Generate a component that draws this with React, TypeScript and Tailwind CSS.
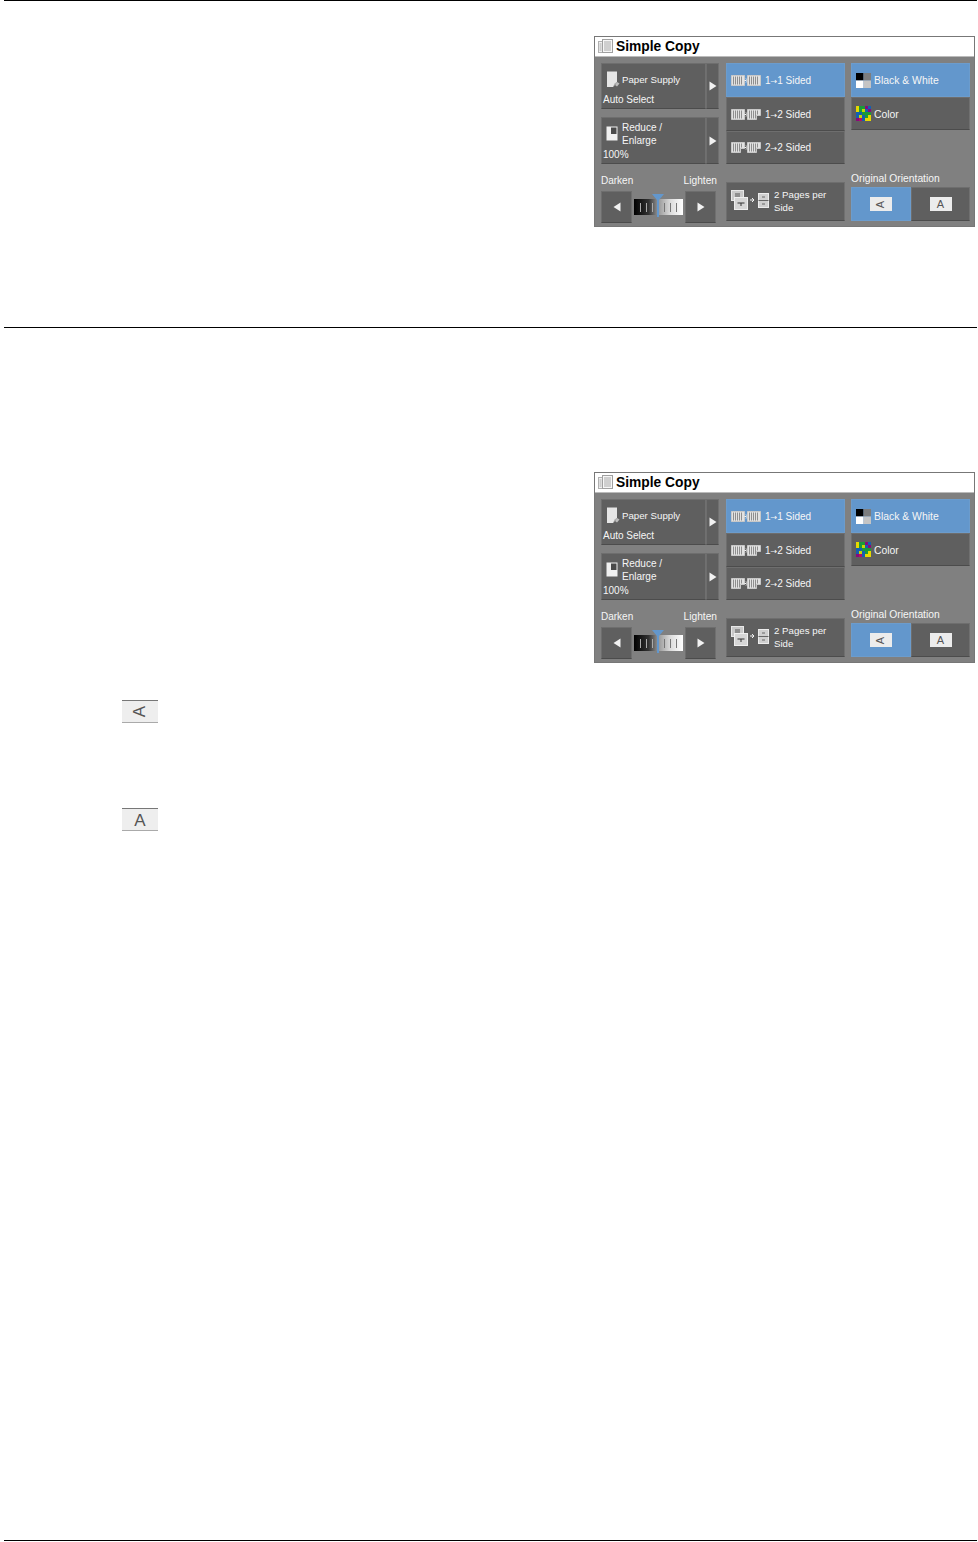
const FONT = "font-['Liberation_Sans',Arial,sans-serif]";

const Tri = ({ dir }: { dir: 'l' | 'r' }) => (
  <svg width="8" height="10" viewBox="0 0 8 10">
    <path d={dir === 'r' ? 'M0.5 0.5 L7.5 5 L0.5 9.5 Z' : 'M7.5 0.5 L0.5 5 L7.5 9.5 Z'} fill="#f2f2f2" />
  </svg>
);

const BookIcon = () => (
  <svg width="16" height="15" viewBox="0 0 16 15">
    <rect x="0.5" y="2.5" width="4" height="11" fill="#f0f0f0" stroke="#b0b0b0" />
    <rect x="4.5" y="0.5" width="10" height="13" fill="#f6f6f6" stroke="#a0a0a0" />
    <path d="M6 3h7M6 5h7M6 7h7M6 9h7M6 11h7M1.5 5h2M1.5 7h2M1.5 9h2M1.5 11h2" stroke="#a8a8a8" strokeWidth="1" />
  </svg>
);

const PaperIcon = () => (
  <svg width="15" height="17" viewBox="0 0 15 17">
    <path d="M1 0.5H11V11L7 16H1Z" fill="#e6e6e6" />
    <path d="M11 11L13.5 12.5L11 15.5L9 14Z" fill="#bdbdbd" />
    <path d="M7 16L8.5 12.5L11 11Z" fill="#a8a8a8" />
  </svg>
);

const ReduceIcon = () => (
  <svg width="12" height="15" viewBox="0 0 12 15">
    <rect x="0.5" y="0.5" width="11" height="14" fill="#f0f0f0" />
    <rect x="5" y="1.5" width="5.5" height="6.5" fill="#4a4a4a" />
  </svg>
);

const Page = ({ x, folded }: { x: number; folded?: boolean }) => (
  <g>
    <path
      d={folded ? `M${x} 0.5h13v6h-4v4h-9z` : `M${x} 0.5h13v10h-13z`}
      fill="#e2e2e2"
      stroke="#c8c8c8"
    />
    {[2, 4, 6, 8, 10].map((o) => (
      <path key={o} d={`M${x + o} 1.5v${folded && o > 8 ? 4 : 8}`} stroke="#8e8e8e" strokeWidth="1" />
    ))}
  </g>
);

const SidedIcon = ({ mode }: { mode: 1 | 2 | 3 }) => (
  <svg width="30" height="11" viewBox="0 0 30 11">
    <Page x={0.5} folded={mode === 3} />
    <path d="M13.5 5.5h2M15 3.5l2 2-2 2" stroke="#f4f4f4" strokeWidth="1" fill="none" />
    <Page x={16.5} folded={mode !== 1} />
  </svg>
);

const BwIcon = () => (
  <svg width="15" height="15" viewBox="0 0 15 15">
    <rect x="0" y="0" width="7.5" height="7.5" fill="#000" />
    <rect x="7.5" y="0" width="7.5" height="7.5" fill="#7d7d7d" />
    <rect x="0" y="7.5" width="7.5" height="7.5" fill="#fff" />
    <rect x="7.5" y="7.5" width="7.5" height="7.5" fill="#c4c4c4" />
  </svg>
);

const ColorIcon = () => {
  const cells = [
    ['#e6d800', '#1a9a3a', '#1a9a3a', '#8a0a7a', '#1460b0'],
    ['#e6d800', '#1a9a3a', '#c8d800', '#1460b0', '#8a0a7a'],
    ['#1460b0', '#1460b0', '#1a9a3a', '#1a9a3a', '#1a9a3a'],
    ['#1460b0', '#c8d800', '#1460b0', '#1a9a3a', '#e6d800'],
    ['#8a0a7a', '#b0106a', '#1460b0', '#e6d800', '#e6d800'],
  ];
  return (
    <svg width="15" height="15" viewBox="0 0 15 15" shapeRendering="crispEdges">
      {cells.map((row, r) =>
        row.map((c, i) => <rect key={`${r}-${i}`} x={i * 3} y={r * 3} width="3" height="3" fill={c} />),
      )}
    </svg>
  );
};

const PagesIcon = () => (
  <svg width="40" height="21" viewBox="0 0 40 21">
    <rect x="0.5" y="0.5" width="12" height="10" fill="#c9c9c9" stroke="#e8e8e8" />
    <path d="M4 4h5M4 6h5" stroke="#555" />
    <rect x="3.5" y="7.5" width="13" height="12" fill="#d6d6d6" stroke="#efefef" />
    <path d="M6.5 13h7M10 13v3" stroke="#333" />
    <path d="M19 10h3M21 8l2 2-2 2" stroke="#f2f2f2" fill="none" />
    <rect x="27.5" y="3.5" width="10" height="14" fill="#cfcfcf" stroke="#ececec" />
    <path d="M27.5 10.5h10M31 7h3M31 14h3" stroke="#666" />
  </svg>
);

const PortraitA = () => (
  <span className={`flex h-[14px] w-[22px] items-center justify-center bg-[#ececec] text-[11px] leading-none text-[#555] ${FONT}`}>A</span>
);

const LandscapeA = () => (
  <span className={`flex h-[14px] w-[22px] items-center justify-center bg-[#ececec] text-[11px] leading-none text-[#555] ${FONT}`}>
    <span className="-rotate-90">A</span>
  </span>
);

const Arrow = () => <span className="font-['DejaVu_Sans',sans-serif] text-[8px]">→</span>;

const Btn = 'border border-t-[#6e6e6e] border-l-[#6e6e6e] border-r-[#707070] border-b-[#4c4c4c] bg-[#5f5f5f]';
const Sel = 'border border-[#6c9ccc] bg-[#6397cc]';

const SupplyButton = ({ children, h }: { children: React.ReactNode; h: string }) => (
  <div className={`flex ${h}`}>
    <div className={`${Btn} w-[105px] shrink-0`}>{children}</div>
    <div className={`${Btn} flex flex-1 items-center justify-center`}>
      <Tri dir="r" />
    </div>
  </div>
);

const SimpleCopy = () => (
  <div className={`ml-[594px] flex h-[191px] w-[381px] flex-col border border-[#777] bg-[#808080] text-[10px] leading-[13px] text-[#f6f6f6] ${FONT}`}>
    <div className="flex h-[20px] shrink-0 items-center gap-[2px] border-b border-[#bbb] bg-white pl-[3px]">
      <BookIcon />
      <span className="text-[13.8px] font-bold leading-none text-black">Simple Copy</span>
    </div>

    <div className="flex pl-[6px] pt-[6px]">
      {/* left column */}
      <div className="flex w-[118px] flex-col">
        <SupplyButton h="h-[46px]">
          <div className="flex items-center gap-[1px] pl-[4px] pt-[7px]">
            <PaperIcon />
            <span className="text-[9.7px]">Paper Supply</span>
          </div>
          <div className="pl-px pt-[5px]">Auto Select</div>
        </SupplyButton>
        <div className="mt-[8px]">
          <SupplyButton h="h-[47px]">
            <div className="flex items-start gap-[4px] pl-[4px] pt-[3px]">
              <span className="pt-[5px]">
                <ReduceIcon />
              </span>
              <span>
                Reduce /<br />
                Enlarge
              </span>
            </div>
            <div className="pl-px pt-px">100%</div>
          </SupplyButton>
        </div>
        <div className="mt-[11px] flex justify-between pr-[2px] leading-[12px]">
          <span>Darken</span>
          <span className="text-[10.2px]">Lighten</span>
        </div>
        <div className="mt-[4px] flex h-[32px] items-center">
          <div className={`${Btn} flex h-full w-[31px] shrink-0 items-center justify-center`}>
            <Tri dir="l" />
          </div>
          <div className="relative mx-[2px] h-[16px] w-[49px] bg-[linear-gradient(90deg,#000_0%,#333_30%,#999_50%,#ddd_75%,#fff_100%)]">
            <div className="flex h-full items-center justify-around px-[3px]">
              {[0, 1, 2, 3, 4, 5, 6].map((i) => (
                <span key={i} className={`h-[9px] w-px ${i < 3 ? 'bg-[#aaa]' : 'bg-[#777]'}`} />
              ))}
            </div>
            <svg className="absolute -top-[5px] left-[18px]" width="12" height="23" viewBox="0 0 12 23">
              <path d="M0 0H12L7 6V23H5V6Z" fill="#6397cc" />
            </svg>
          </div>
          <div className={`${Btn} flex h-full w-[31px] shrink-0 items-center justify-center`}>
            <Tri dir="r" />
          </div>
        </div>
      </div>

      {/* middle column */}
      <div className="ml-[7px] flex w-[119px] flex-col">
        <div className={`${Sel} flex h-[34px] items-center gap-[4px] pl-[4px]`}>
          <SidedIcon mode={1} />
          <span className="pt-px">1<Arrow />1 Sided</span>
        </div>
        <div className={`${Btn} flex h-[34px] items-center gap-[4px] pl-[4px]`}>
          <SidedIcon mode={2} />
          <span className="pt-px">1<Arrow />2 Sided</span>
        </div>
        <div className={`${Btn} flex h-[33px] items-center gap-[4px] pl-[4px]`}>
          <SidedIcon mode={3} />
          <span>2<Arrow />2 Sided</span>
        </div>
        <div className={`${Btn} mt-[18px] flex h-[39px] items-center gap-[3px] pb-[2px] pl-[4px]`}>
          <PagesIcon />
          <span className="text-[9.7px]">
            2 Pages per
            <br />
            Side
          </span>
        </div>
      </div>

      {/* right column */}
      <div className="ml-[6px] flex w-[119px] flex-col">
        <div className={`${Sel} flex h-[34px] items-center gap-[3px] pl-[4px]`}>
          <BwIcon />
          <span className="text-[10.4px]">Black &amp; White</span>
        </div>
        <div className={`${Btn} flex h-[33px] items-center gap-[3px] pl-[4px]`}>
          <ColorIcon />
          <span className="pt-px text-[10.4px]">Color</span>
        </div>
        <div className="mt-[43px] text-[10.3px] leading-[12px]">Original Orientation</div>
        <div className="mt-[2px] flex h-[34px]">
          <div className={`${Sel} flex w-[60px] items-center justify-center`}>
            <LandscapeA />
          </div>
          <div className={`${Btn} flex flex-1 items-center justify-center`}>
            <PortraitA />
          </div>
        </div>
      </div>
    </div>
  </div>
);

const Rule = ({ className }: { className: string }) => <div className={`ml-[4px] h-px w-[973px] bg-black ${className}`} />;

const KeyIcon = ({ children, className }: { children: React.ReactNode; className: string }) => (
  <div className={`ml-[122px] flex h-[23px] w-[36px] items-center justify-center border-t border-t-[#777] border-b border-b-[#aaa] bg-[#eeeeee] ${FONT} ${className}`}>
    {children}
  </div>
);

export default function App() {
  return (
    <div className="h-[1542px] w-[978px] overflow-hidden bg-white">
      <Rule className="" />
      <div className="pt-[35px]">
        <SimpleCopy />
      </div>
      <Rule className="mt-[100px]" />
      <div className="pt-[144px]">
        <SimpleCopy />
      </div>
      <KeyIcon className="mt-[37px]">
        <span className="-rotate-90 text-[17px] leading-none text-[#555]">A</span>
      </KeyIcon>
      <KeyIcon className="mt-[85px]">
        <span className="pt-px text-[17px] leading-none text-[#555]">A</span>
      </KeyIcon>
      <Rule className="mt-[709px]" />
    </div>
  );
}
